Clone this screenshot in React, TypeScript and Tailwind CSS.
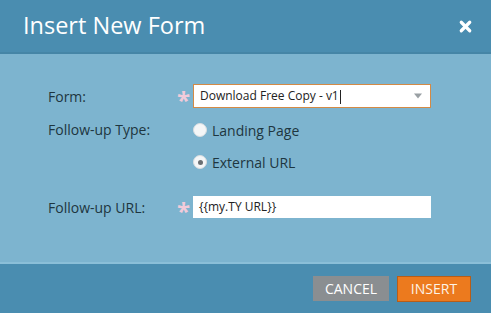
import { X } from 'lucide-react';

const font = { fontFamily: '"Open Sans", "Noto Sans", sans-serif' };

function Asterisk() {
  return (
    <span className="w-[18px] pl-[2px] text-[24px] leading-none text-[#f2cbda] font-bold h-[14px] flex items-start justify-start -mt-[2px]">
      *
    </span>
  );
}

function Radio({ checked, label }: { checked?: boolean; label: string }) {
  return (
    <label className="flex items-center gap-[5px] h-[20px]">
      <span className="w-[14px] h-[14px] rounded-full bg-[#f4f6f7] border border-[#d8dde0] flex items-center justify-center">
        {checked && <span className="w-[5px] h-[5px] rounded-full bg-[#6a6f73]" />}
      </span>
      <span className="text-[14px] text-[#1e3640]">{label}</span>
    </label>
  );
}

export default function App() {
  return (
    <div className="w-[491px] h-[313px] flex flex-col bg-[#7db4cf] overflow-hidden" style={font}>
      <div className="h-[54px] bg-[#4a8db0] border-b-[2px] border-[#4585a6] flex items-center justify-between pl-[23px] pr-[17px]">
        <h1 className="text-[23.5px] text-white leading-none">Insert New Form</h1>
        <X className="w-[17px] h-[17px] text-white" strokeWidth={4.5} />
      </div>

      <div className="flex-1 pl-[48px] pt-[30px] text-[#1e3640]">
        <div className="flex items-center h-[24px]">
          <span className="w-[127px] text-[14px]">Form:</span>
          <Asterisk />
          <div className="w-[238px] h-[24px] bg-white border border-[#d48a45] flex items-center justify-between pl-[6px] pr-[6px]">
            <span className="text-[12px] text-[#222]">
              Download Free Copy - v1<span className="inline-block w-px h-[14px] bg-[#222] align-middle ml-px" />
            </span>
            <svg width="10" height="6" viewBox="0 0 10 6" className="mr-[1px]">
              <path d="M1 0.5 L9 0.5 L5 5.5 Z" fill="#9aa0a4" />
            </svg>
          </div>
        </div>

        <div className="flex items-start mt-[12px]">
          <span className="w-[145px] text-[14px] leading-[20px]">Follow-up Type:</span>
          <div className="flex flex-col gap-[12px]">
            <Radio label="Landing Page" />
            <Radio checked label="External URL" />
          </div>
        </div>

        <div className="flex items-center h-[22px] mt-[24px]">
          <span className="w-[127px] text-[14px]">Follow-up URL:</span>
          <Asterisk />
          <div className="w-[238px] h-[22px] bg-white flex items-center pl-[6px]">
            <span className="text-[12px] text-[#222]">{'{{my.TY URL}}'}</span>
          </div>
        </div>
      </div>

      <div className="h-[51px] bg-[#4a8db0] border-t-[2px] border-[#8bbfd8] flex items-center justify-end gap-[8px] pr-[20px]">
        <button className="w-[76px] h-[25px] bg-[#8a8e91] text-white text-[14px] leading-none flex items-center justify-center">
          CANCEL
        </button>
        <button className="w-[74px] h-[26px] bg-[#ec7a1e] border border-[#b85d17] text-[#fdf3e6] text-[14px] leading-none flex items-center justify-center">
          INSERT
        </button>
      </div>
    </div>
  );
}
